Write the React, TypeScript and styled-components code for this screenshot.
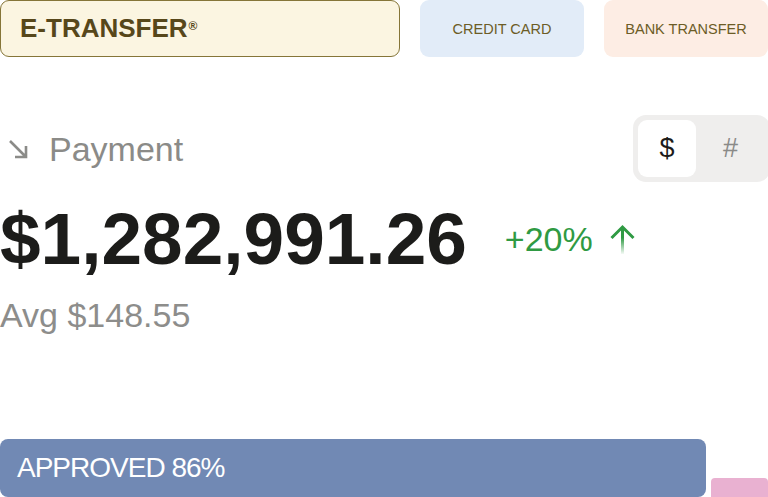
import styled, { createGlobalStyle } from 'styled-components'

const GlobalStyle = createGlobalStyle`
body {
  margin: 0;
  background: #ffffff;
  overflow: hidden;
  font-family: "Liberation Sans", Arial, sans-serif;
}
`

interface iMethod {
  active?: boolean,
  bg?: string
}

const App = () => {
  return (
    <Page>
      <GlobalStyle />
      <MethodRow>
        <Method active>
          E-TRANSFER<Reg>®</Reg>
        </Method>
        <Method bg="#e2ecf8">CREDIT CARD</Method>
        <Method bg="#fdede4">BANK TRANSFER</Method>
      </MethodRow>

      <Header>
        <Label>
          <svg width="24" height="22" viewBox="0 0 24 22" fill="none">
            <path d="M3 3 L19 19 M8 19 H19 V8" stroke="#8b8b88" strokeWidth="2.6" />
          </svg>
          Payment
        </Label>
        <Toggle>
          <ToggleOption active>$</ToggleOption>
          <ToggleOption>#</ToggleOption>
        </Toggle>
      </Header>

      <AmountRow>
        <Amount>$1,282,991.26</Amount>
        <Change>
          +20%
          <svg width="27" height="30" viewBox="0 0 27 30" fill="none">
            <defs>
              <linearGradient id="fade" gradientUnits="userSpaceOnUse" x1="0" y1="3" x2="0" y2="30">
                <stop offset="0.4" stopColor="#2f9a43" stopOpacity="1" />
                <stop offset="1" stopColor="#2f9a43" stopOpacity="0.05" />
              </linearGradient>
            </defs>
            <path d="M13.5 3 V30" stroke="url(#fade)" strokeWidth="3" />
            <path d="M2.5 14 L13.5 3 L24.5 14" stroke="#2f9a43" strokeWidth="3" />
          </svg>
        </Change>
      </AmountRow>

      <Avg>Avg $148.55</Avg>

      <BarRow>
        <Bar>APPROVED 86%</Bar>
        <Rest />
      </BarRow>
    </Page>
  )
}

export default App

const Page = styled.div`
width: 768px;
height: 497px;
display: flex;
flex-direction: column;
overflow: hidden;
`

const MethodRow = styled.div`
display: grid;
grid-template-columns: 400px 164px 164px;
column-gap: 20px;
height: 57px;
`

const Method = styled.div<iMethod>`
display: flex;
align-items: center;
justify-content: ${({active}) => active ? 'flex-start' : 'center'};
box-sizing: border-box;
padding-left: ${({active}) => active ? '19px' : '0'};
border-radius: 9px;
border: ${({active}) => active ? '1.5px solid #857538' : 'none'};
background-color: ${({active, bg}) => active ? '#fbf5e1' : bg};
color: ${({active}) => active ? '#57471a' : '#6c5c26'};
font-size: ${({active}) => active ? '26px' : '14.5px'};
font-weight: ${({active}) => active ? 700 : 400};
`

const Reg = styled.sup`
font-size: 12px;
font-weight: 700;
margin-left: 1px;
position: relative;
top: -3px;
`

const Header = styled.div`
display: flex;
align-items: center;
justify-content: space-between;
margin-top: 58px;
height: 67px;
`

const Label = styled.div`
display: flex;
align-items: center;
gap: 18px;
padding-left: 7px;
font-size: 34px;
color: #8b8b88;
line-height: 1;
`

const Toggle = styled.div`
display: flex;
box-sizing: border-box;
width: 137px;
height: 67px;
margin-right: -2px;
padding: 5px;
border-radius: 13px;
background-color: #efeeed;
`

const ToggleOption = styled.div<{active?: boolean}>`
display: flex;
align-items: center;
justify-content: center;
width: ${({active}) => active ? '58px' : 'auto'};
flex: ${({active}) => active ? 'none' : 1};
border-radius: 9px;
background-color: ${({active}) => active ? '#ffffff' : 'transparent'};
color: ${({active}) => active ? '#1c1c1a' : '#8a8a88'};
font-size: 27px;
`

const AmountRow = styled.div`
display: flex;
align-items: center;
margin-top: 20px;
`

const Amount = styled.div`
font-size: 73px;
font-weight: 700;
line-height: 1;
color: #1c1c1a;
`

const Change = styled.div`
display: flex;
align-items: center;
gap: 16px;
margin-left: 38px;
font-size: 34px;
line-height: 1;
color: #2f9a43;
`

const Avg = styled.div`
margin-top: 23px;
font-size: 34px;
line-height: 1;
color: #8d8d8b;
`

const BarRow = styled.div`
display: flex;
align-items: flex-end;
gap: 5px;
margin-top: auto;
`

const Bar = styled.div`
display: flex;
align-items: center;
box-sizing: border-box;
width: 706px;
height: 58px;
padding-left: 17px;
border-radius: 8px;
background-color: #7189b4;
color: #ffffff;
font-size: 28px;
letter-spacing: -1px;
`

const Rest = styled.div`
flex: 1;
height: 19px;
border-radius: 4px 4px 0 0;
background-color: #e9b1d1;
`
